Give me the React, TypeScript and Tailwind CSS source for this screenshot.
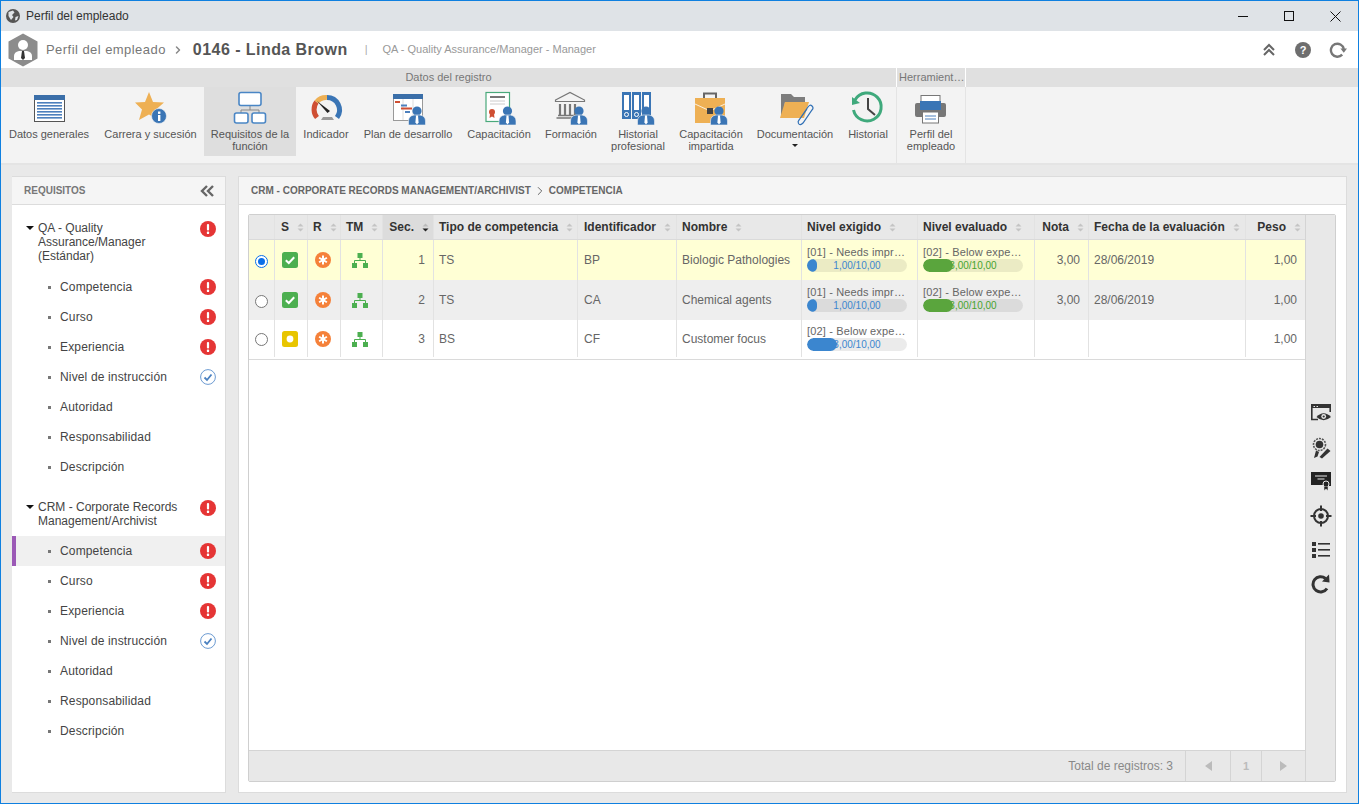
import { Fragment } from 'react';
import { ChevronRight } from 'lucide-react';

const BLUE = '#3a75b5';

function Person({ x, y }: { x: number; y: number }) {
  return (
    <g>
      <circle cx={x} cy={y - 4} r={4.6} fill={BLUE} />
      <path d={`M${x - 8.5} ${y + 10} v-4 q0 -5 5.5 -6 h6 q5.5 1 5.5 6 v4 z`} fill={BLUE} stroke="#f3f3f3" strokeWidth={0.6} />
      <path d={`M${x - 1} ${y + 0.5} h2 l0.6 7 l-1.6 2 l-1.6 -2 z`} fill="#fff" />
    </g>
  );
}

function Ico({ children }: { children: React.ReactNode }) {
  return (
    <svg width="36" height="36" viewBox="0 0 36 36" fill="none" className="overflow-visible">
      {children}
    </svg>
  );
}

const DatosIcon = () => (
  <Ico>
    <rect x="3.5" y="5.5" width="30" height="26" fill="#fff" stroke="#555" />
    <rect x="3" y="5" width="31" height="5" fill="#3a6ea8" />
    {[12, 15, 18, 21, 24, 27].map((y) => (
      <rect key={y} x="6" y={y} width="25" height="1.6" fill="#4d80bd" />
    ))}
  </Ico>
);
const CarreraIcon = () => (
  <Ico>
    <path d="M16 2 L20 12 L31 12.5 L23 19.5 L26 30 L16 24.5 L6 30 L9 19.5 L2 12.5 L12 12 Z" fill="#eeb054" strokeLinejoin="round" />
    <circle cx="26" cy="26" r="7.5" fill={BLUE} stroke="#f3f3f3" strokeWidth="0.6" />
    <rect x="25" y="25" width="2.4" height="6" fill="#fff" />
    <rect x="25" y="21.5" width="2.4" height="2.4" fill="#fff" />
  </Ico>
);
const RequisitosIcon = () => (
  <Ico>
    <path d="M18 16 V20 M9 23 V20 H27 V23" stroke="#888" />
    <rect x="7" y="2.5" width="22" height="13" rx="2" fill="#fff" stroke="#4a86c5" strokeWidth="1.6" />
    <rect x="2.5" y="23" width="13.5" height="10" rx="2" fill="#fff" stroke="#4a86c5" strokeWidth="1.6" />
    <rect x="20" y="23" width="13.5" height="10" rx="2" fill="#fff" stroke="#4a86c5" strokeWidth="1.6" />
  </Ico>
);
const IndicadorIcon = () => (
  <Ico>
    <path d="M9 27.5 A12.5 12.5 0 0 1 8.5 12" stroke="#cf4f33" strokeWidth="5" />
    <path d="M8.5 12 A12.5 12.5 0 0 1 19 7.5" stroke="#eeb054" strokeWidth="5" />
    <path d="M19 7.5 A12.5 12.5 0 0 1 29 27.5" stroke={BLUE} strokeWidth="5" />
    <path d="M9 11 L22 21 L19.5 23 Z" fill="#222" />
    <path d="M13 30 L15 27 H24 L26 30 Z" fill="#999" />
  </Ico>
);
const PlanIcon = () => (
  <Ico>
    <rect x="3.5" y="4.5" width="29" height="26" fill="#fff" stroke="#999" />
    <rect x="3" y="4" width="30" height="5" fill="#3a6ea8" />
    <path d="M13 9 V30 M23 9 V30" stroke="#ddd" />
    <rect x="5" y="11" width="5" height="2" fill="#cf4f33" />
    <rect x="11" y="14.5" width="6" height="2" fill="#4d80bd" />
    <rect x="11" y="17.5" width="11" height="2" fill="#cf4f33" />
    <rect x="15" y="21" width="5" height="2" fill="#4d80bd" />
    <Person x={27} y={25} />
  </Ico>
);
const CapacitacionIcon = () => (
  <Ico>
    <rect x="5" y="2.5" width="23.5" height="29" fill="#fff" stroke="#49a97b" strokeWidth="1.2" />
    <rect x="9" y="6" width="15" height="2" fill="#777" />
    <path d="M9 11 H24 M9 14 H24" stroke="#ccc" />
    <circle cx="11" cy="22" r="3" fill="#cf4f33" />
    <path d="M9 24 L8.5 28 L11 26.5 L13.5 28 L13 24 Z" fill="#cf4f33" />
    <Person x={26.5} y={25} />
  </Ico>
);
const FormacionIcon = () => (
  <Ico>
    <path d="M2.5 10 L17 2.5 L31.5 10 V11.5 H2.5 Z" fill="#f3f3f3" stroke="#777" strokeWidth="1.2" />
    <path d="M7 14 V25 M12 14 V25 M17 14 V25 M22 14 V25" stroke="#777" strokeWidth="2.2" />
    <path d="M3.5 28 H30 M5 25.5 H27" stroke="#777" strokeWidth="1.5" />
    <Person x={26} y={25} />
  </Ico>
);
const BinderIcon = () => (
  <Ico>
    {[2, 12, 22].map((x) => (
      <Fragment key={x}>
        <rect x={x} y="2" width="9" height="27" fill={BLUE} />
        <rect x={x + 2} y="5" width="5" height="15" fill="#fff" />
        <circle cx={x + 4.5} cy="24.5" r="2" stroke="#fff" />
      </Fragment>
    ))}
    <Person x={26} y={25} />
  </Ico>
);
const BriefcaseIcon = () => (
  <Ico>
    <path d="M11 8 V3.5 H23 V8" stroke="#666" strokeWidth="2" />
    <rect x="2" y="8" width="30" height="25" fill="#eeb054" />
    <path d="M2 14 L15 20 M32 14 L19 20" stroke="#fff" strokeWidth="0.8" />
    <rect x="14" y="18" width="6" height="6" fill="#444" />
    <Person x={26} y={25} />
  </Ico>
);
const FolderIcon = () => (
  <Ico>
    <path d="M4 4 H14 L17 7 H28 V12 H8 L6 28 H4 Z" fill="#7d7d7d" />
    <path d="M8 12 H32 L27 28 H3 Z" fill="#eeb054" />
    <path d="M22 30 L31 17 Q33 14 35 16 Q37 18 35 20 L26 33 Q23 36 21.5 33.5 Q20.5 31.5 22 30 L30 19" stroke="#2f6fb5" strokeWidth="1.2" />
  </Ico>
);
const ClockIcon = () => (
  <Ico>
    <path d="M5 10 A14 14 0 1 1 3.5 20" stroke="#3fa97c" strokeWidth="3" />
    <path d="M2 7 L10 13 L2 15 Z" fill="#3fa97c" />
    <path d="M18 8 V19 L25 25" stroke="#444" strokeWidth="2" />
  </Ico>
);
const PrinterIcon = () => (
  <Ico>
    <rect x="8" y="5.5" width="19" height="8" fill="#fff" stroke="#777" />
    <rect x="2" y="13" width="31" height="14" rx="2" fill="#777" />
    <rect x="7" y="11" width="21" height="9" fill={BLUE} />
    <rect x="9.5" y="22" width="16" height="11" fill="#fff" stroke="#777" />
    <path d="M12 26 H23 M12 29 H23" stroke="#4d80bd" />
  </Ico>
);

type Tool = { label: string; w: string; icon: React.ReactNode; active?: boolean; caret?: boolean };

const tools: Tool[] = [
  { label: 'Datos generales', w: 'w-[96px]', icon: <DatosIcon /> },
  { label: 'Carrera y sucesión', w: 'w-[107px]', icon: <CarreraIcon /> },
  { label: 'Requisitos de la función', w: 'w-[92px]', icon: <RequisitosIcon />, active: true },
  { label: 'Indicador', w: 'w-[60px]', icon: <IndicadorIcon /> },
  { label: 'Plan de desarrollo', w: 'w-[104px]', icon: <PlanIcon /> },
  { label: 'Capacitación', w: 'w-[78px]', icon: <CapacitacionIcon /> },
  { label: 'Formación', w: 'w-[66px]', icon: <FormacionIcon /> },
  { label: 'Historial profesional', w: 'w-[68px]', icon: <BinderIcon /> },
  { label: 'Capacitación impartida', w: 'w-[78px]', icon: <BriefcaseIcon /> },
  { label: 'Documentación', w: 'w-[90px]', icon: <FolderIcon />, caret: true },
  { label: 'Historial', w: 'w-[56px]', icon: <ClockIcon /> },
];

function ToolButton({ t }: { t: Tool }) {
  return (
    <div className={`${t.w} flex shrink-0 flex-col items-center pt-[3px] ${t.active ? 'bg-[#dedede]' : ''}`}>
      <div className="flex h-[38px] items-start justify-center">{t.icon}</div>
      <div className="px-1 text-center text-[11px] leading-[12px] text-[#555]">{t.label}</div>
      {t.caret && <div className="mt-[4px] h-0 w-0 border-x-[3px] border-t-[3px] border-x-transparent border-t-[#222]" />}
    </div>
  );
}

const AlertDot = () => (
  <svg width="16" height="16" viewBox="0 0 16 16">
    <circle cx="8" cy="8" r="8" fill="#e53535" />
    <rect x="6.9" y="3" width="2.2" height="6.5" rx="1" fill="#fff" />
    <rect x="6.9" y="10.6" width="2.2" height="2.4" rx="0.6" fill="#fff" />
  </svg>
);
const OkDot = () => (
  <svg width="16" height="16" viewBox="0 0 16 16" fill="none">
    <circle cx="8" cy="8" r="7.4" fill="#fff" stroke="#6c9bd2" />
    <path d="M4.5 8.5 L7 11 L11.5 5.5" stroke="#4a80c0" strokeWidth="1.8" />
  </svg>
);

type Req = { label: string; state?: 'alert' | 'ok'; active?: boolean };

const reqItems = (active: boolean): Req[] => [
  { label: 'Competencia', state: 'alert', active },
  { label: 'Curso', state: 'alert' },
  { label: 'Experiencia', state: 'alert' },
  { label: 'Nivel de instrucción', state: 'ok' },
  { label: 'Autoridad' },
  { label: 'Responsabilidad' },
  { label: 'Descripción' },
];

function TreeGroup({ lines, items, listClass }: { lines: string[]; items: Req[]; listClass: string }) {
  return (
    <div>
      <div className="relative pl-[26px] pr-[40px] text-[12px] leading-[14px] text-[#444]">
        <div className="absolute left-[14px] top-[5px] h-0 w-0 border-x-[4px] border-t-[4px] border-x-transparent border-t-[#111]" />
        {lines.map((l) => (
          <div key={l} className="whitespace-nowrap">{l}</div>
        ))}
        <div className="absolute right-[9px] top-0"><AlertDot /></div>
      </div>
      <div className={listClass}>
        {items.map((it) => (
          <div
            key={it.label}
            className={`flex h-[30px] items-center border-l-[4px] pr-[9px] text-[12px] text-[#444] ${it.active ? 'border-l-[#9b59b6] bg-[#f0f0f0]' : 'border-l-transparent'}`}
          >
            <span className="ml-[32px] h-[3px] w-[3px] bg-[#777]" />
            <span className="ml-[9px] flex-1 tracking-[0.15px]">{it.label}</span>
            {it.state === 'alert' && <AlertDot />}
            {it.state === 'ok' && <OkDot />}
          </div>
        ))}
      </div>
    </div>
  );
}

const GRID = 'grid grid-cols-[26px_33px_33px_42px_51px_144px_99px_125px_116px_117px_54px_157px_60px]';

function SortIcon({ active }: { active?: boolean }) {
  return (
    <svg width="7" height="9" viewBox="0 0 7 9" className="shrink-0">
      <path d="M3.5 0.5 L6.5 3.5 H0.5 Z" fill={active ? '#bbb' : '#c4c4c4'} />
      <path d="M3.5 8.5 L6.5 5.5 H0.5 Z" fill={active ? '#222' : '#c4c4c4'} />
    </svg>
  );
}

const headers: { label: string; pad: string; active?: boolean }[] = [
  { label: '', pad: 'pl-[5px]' },
  { label: 'S', pad: 'pl-[6px]' },
  { label: 'R', pad: 'pl-[5px]' },
  { label: 'TM', pad: 'pl-[5px]' },
  { label: 'Sec.', pad: 'justify-end pr-[4px]', active: true },
  { label: 'Tipo de competencia', pad: 'pl-[5px]' },
  { label: 'Identificador', pad: 'pl-[6px]' },
  { label: 'Nombre', pad: 'pl-[5px]' },
  { label: 'Nivel exigido', pad: 'pl-[5px]' },
  { label: 'Nivel evaluado', pad: 'pl-[5px]' },
  { label: 'Nota', pad: 'justify-end pr-[4px]' },
  { label: 'Fecha de la evaluación', pad: 'pl-[5px]' },
  { label: 'Peso', pad: 'justify-end pr-[4px]' },
];

function Radio({ on }: { on?: boolean }) {
  return on ? (
    <div className="flex h-[13px] w-[13px] items-center justify-center rounded-full border border-[#0a6fe8] bg-white">
      <div className="h-[7px] w-[7px] rounded-full bg-[#0a6fe8]" />
    </div>
  ) : (
    <div className="h-[13px] w-[13px] rounded-full border border-[#777] bg-white" />
  );
}

const StatusOk = () => (
  <svg width="16" height="16" viewBox="0 0 16 16" fill="none">
    <rect width="16" height="16" rx="2.5" fill="#4caf50" />
    <path d="M3.8 8.2 L6.8 11 L12.2 5.2" stroke="#fff" strokeWidth="2" />
  </svg>
);
const StatusWait = () => (
  <svg width="16" height="16" viewBox="0 0 16 16">
    <rect width="16" height="16" rx="2.5" fill="#e8c500" />
    <circle cx="8" cy="8" r="3.4" fill="#fff" />
  </svg>
);
const Asterisk = () => (
  <svg width="16" height="16" viewBox="0 0 16 16" fill="none">
    <circle cx="8" cy="8" r="8" fill="#f5813a" />
    <path d="M8 3.5 V12.5 M4.1 5.75 L11.9 10.25 M11.9 5.75 L4.1 10.25" stroke="#fff" strokeWidth="2" />
  </svg>
);
const Hierarchy = () => (
  <svg width="16" height="16" viewBox="0 0 16 16" fill="none">
    <rect x="5.5" y="1" width="5" height="5" fill="#4caf50" />
    <rect x="0" y="11" width="5" height="5" fill="#4caf50" />
    <rect x="11" y="11" width="5" height="5" fill="#4caf50" />
    <path d="M8 6 V9 M2.5 11 V8.5 H13.5 V11" stroke="#4caf50" />
  </svg>
);

function Level({ text, value, tone, top }: { text: string; value: string; tone: 'blue' | 'green'; top: string }) {
  const pct = parseFloat(value.replace(',', '.')) * 10;
  return (
    <div className={`px-[5px] ${top}`}>
      <div className="whitespace-nowrap text-[11px] leading-[13px] tracking-[0.15px] text-[#666]">{text}</div>
      <div className="relative h-[13px] w-[100px] overflow-hidden rounded-full bg-black/[0.08]">
        <div className={`text-center text-[10px] leading-[13px] ${tone === 'blue' ? 'text-[#3b86cf]' : 'text-[#46a32e]'}`}>{value}/10,00</div>
        <div
          className={`absolute left-0 top-0 h-full rounded-full ${tone === 'blue' ? 'bg-[#3b86cf]' : 'bg-[#5aa53d]'}`}
          style={{ width: `${pct}%` }}
        />
      </div>
    </div>
  );
}

type Row = {
  rowClass: string;
  levelTop: string;
  on?: boolean;
  wait?: boolean;
  sec: string;
  tipo: string;
  id: string;
  name: string;
  req: [string, string];
  ev?: [string, string];
  nota: string;
  fecha: string;
};

const rows: Row[] = [
  { rowClass: 'h-[40px] bg-[#ffffd5]', levelTop: 'pt-[6px]', on: true, sec: '1', tipo: 'TS', id: 'BP', name: 'Biologic Pathologies', req: ['[01] - Needs impr…', '1,00'], ev: ['[02] - Below expe…', '3,00'], nota: '3,00', fecha: '28/06/2019' },
  { rowClass: 'h-[40px] bg-[#eeeeee]', levelTop: 'pt-[6px]', sec: '2', tipo: 'TS', id: 'CA', name: 'Chemical agents', req: ['[01] - Needs impr…', '1,00'], ev: ['[02] - Below expe…', '3,00'], nota: '3,00', fecha: '28/06/2019' },
  { rowClass: 'h-[39px] bg-white pb-[2px]', levelTop: 'pt-[5px]', wait: true, sec: '3', tipo: 'BS', id: 'CF', name: 'Customer focus', req: ['[02] - Below expe…', '3,00'], nota: '', fecha: '' },
];

const cell = 'flex items-center border-r border-[#e2e2e2] min-w-0';
const txt = 'pl-[5px] text-[12px] text-[#666]';
const num = 'justify-end pr-[8px] text-[12px] text-[#666]';

const SideIcons = () => (
  <div className="flex flex-col items-center">
    <svg width="22" height="20" viewBox="0 0 22 20" fill="none" className="mb-[14px]">
      <path d="M8 16.5 H1.8 V1.8 H20.2 V9" stroke="#333" strokeWidth="1.6" />
      <rect x="2" y="2" width="18" height="3" fill="#333" />
      <path d="M3.5 3.5 H5 M6.5 3.5 H8" stroke="#e8e8e8" />
      <path d="M6.5 14 Q13.5 6.5 21 14 Q13.5 20.5 6.5 14 Z" fill="#333" />
      <circle cx="13.7" cy="13.5" r="2.4" fill="#e8e8e8" />
      <circle cx="13.7" cy="13.5" r="1.1" fill="#333" />
    </svg>
    <svg width="22" height="22" viewBox="0 0 22 22" fill="none" className="mb-[12px]">
      <circle cx="9.5" cy="7.5" r="6" stroke="#555" strokeWidth="1.6" strokeDasharray="2 1" />
      <circle cx="9.5" cy="7.5" r="3.8" fill="#333" />
      <path d="M6 13.5 L4 21 L7.5 19.5 L9 15 Z" fill="#333" />
      <path d="M9.5 20 L17.5 11.5 L20.5 14 L12 21.5 Z" fill="#333" />
    </svg>
    <svg width="22" height="20" viewBox="0 0 22 20" fill="none" className="mb-[14px]">
      <path d="M1 1 H21 V15 H16 V14 H1 Z" fill="#222" />
      <path d="M5 5 H17 M7.5 8 H14.5" stroke="#e8e8e8" />
      <circle cx="16" cy="13" r="3" fill="#222" stroke="#e8e8e8" />
      <path d="M14 15.5 V19.5 L16 18 L18 19.5 V15.5" fill="#222" stroke="#e8e8e8" strokeWidth="0.5" />
    </svg>
    <svg width="22" height="22" viewBox="0 0 22 22" fill="none" className="mb-[14px]">
      <circle cx="11" cy="11" r="7" stroke="#333" strokeWidth="2" />
      <circle cx="11" cy="11" r="2.8" fill="#333" />
      <path d="M11 0.5 V6 M11 16 V21.5 M0.5 11 H6 M16 11 H21.5" stroke="#333" strokeWidth="2" />
    </svg>
    <svg width="20" height="18" viewBox="0 0 20 18" fill="none" className="mb-[15px]">
      {[1, 7, 13].map((y) => (
        <Fragment key={y}>
          <rect x="1" y={y} width="4" height="4" fill="#333" />
          <rect x="7" y={y + 1} width="12" height="1.6" fill="#333" />
        </Fragment>
      ))}
    </svg>
    <svg width="20" height="20" viewBox="0 0 20 20" fill="none">
      <path d="M16 14.5 A7.6 7.6 0 1 1 14.5 4.5" stroke="#333" strokeWidth="3" />
      <path d="M11 7.5 L18.5 8.5 L18 0.5 Z" fill="#333" />
    </svg>
  </div>
);

export default function App() {
  return (
    <div className="flex h-screen w-screen flex-col overflow-hidden border border-[#0f80e0] bg-[#e9e9e9] font-['Liberation_Sans',Arial,sans-serif]">
      {/* title bar */}
      <div className="flex h-[30px] shrink-0 items-center bg-[#dfe3e7] pl-[5px]">
        <svg width="14" height="14" viewBox="0 0 14 14">
          <circle cx="7" cy="7" r="7" fill="#555" />
          <path d="M2.5 3 L7 1.5 L8.5 3.5 L6 6 L7.5 8 L5 11 L2.5 7 Z M9.5 8 L12.5 7 L11 11 L9 11.5 Z" fill="#dfe3e7" />
        </svg>
        <span className="ml-[6px] text-[12px] text-[#333]">Perfil del empleado</span>
        <div className="ml-auto flex items-center">
          <div className="flex h-[30px] w-[46px] items-center justify-center"><div className="h-px w-[10px] bg-[#111]" /></div>
          <div className="flex h-[30px] w-[46px] items-center justify-center"><div className="h-[10px] w-[10px] border border-[#111]" /></div>
          <div className="flex h-[30px] w-[46px] items-center justify-center">
            <svg width="11" height="11" viewBox="0 0 11 11" stroke="#111"><path d="M0.5 0.5 L10.5 10.5 M10.5 0.5 L0.5 10.5" /></svg>
          </div>
        </div>
      </div>

      {/* record header */}
      <div className="flex h-[37px] shrink-0 items-center bg-white pl-[7px]">
        <svg width="30" height="34" viewBox="0 0 30 34">
          <path d="M15 0.5 L29.5 8.5 V25.5 L15 33.5 L0.5 25.5 V8.5 Z" fill="#8c8c8c" />
          <circle cx="15" cy="12" r="5" fill="#fff" />
          <path d="M6 27 V23 Q6 19 11 18 H19 Q24 19 24 23 V27 Z" fill="#fff" />
          <path d="M14 18 H16 L17 25 L15 27 L13 25 Z" fill="#333" />
        </svg>
        <span className="ml-[8px] text-[13px] tracking-[0.45px] text-[#777]">Perfil del empleado</span>
        <ChevronRight size={12} strokeWidth={3} className="ml-[6px] text-[#888]" />
        <span className="ml-[9px] text-[16px] font-bold tracking-[0.45px] text-[#555]">0146 - Linda Brown</span>
        <span className="ml-[17px] text-[11px] text-[#aaa]">|</span>
        <span className="ml-[15px] text-[11px] text-[#999]">QA - Quality Assurance/Manager - Manager</span>
        <div className="ml-auto flex items-center gap-[18px] pr-[11px]">
          <svg width="16" height="16" viewBox="0 0 16 16" fill="none" stroke="#666" strokeWidth="2"><path d="M3 8 L8 3 L13 8 M3 13 L8 8 L13 13" /></svg>
          <svg width="16" height="16" viewBox="0 0 16 16">
            <circle cx="8" cy="8" r="8" fill="#6e6e6e" />
            <text x="8" y="12" textAnchor="middle" fontSize="11" fontWeight="700" fill="#fff" fontFamily="Liberation Sans">?</text>
          </svg>
          <svg width="18" height="16" viewBox="0 0 18 16" fill="none">
            <path d="M13.2 12.6 A6.5 6.5 0 1 1 14.8 7" stroke="#777" strokeWidth="2.4" />
            <path d="M11.4 6.5 L18 6.5 L14.8 10.8 Z" fill="#777" />
          </svg>
        </div>
      </div>

      {/* ribbon */}
      <div className="flex h-[19px] shrink-0 gap-[1px] bg-white text-[11px] leading-[19px] text-[#777]">
        <div className="w-[895px] bg-[#e0e0e0] text-center">Datos del registro</div>
        <div className="w-[68px] whitespace-nowrap bg-[#e0e0e0] px-[2px] text-center">Herramient…</div>
        <div className="flex-1 bg-[#e0e0e0]" />
      </div>
      <div className="flex h-[78px] shrink-0 border-b-[2px] border-[#e4e4e4] bg-[#f3f3f3]">
        <div className="flex w-[895px] pb-[7px]">
          {tools.map((t) => (
            <ToolButton key={t.label} t={t} />
          ))}
        </div>
        <div className="border-x border-[#e4e4e4]">
          <ToolButton t={{ label: 'Perfil del empleado', w: 'w-[68px]', icon: <PrinterIcon /> }} />
        </div>
      </div>

      {/* body */}
      <div className="flex min-h-0 flex-1 gap-[12px] pb-[10px] pl-[11px] pr-[11px] pt-[11px]">
        {/* requirements tree */}
        <div className="flex w-[214px] shrink-0 flex-col border-y border-r border-[#dcdcdc] bg-white">
          <div className="flex h-[28px] shrink-0 items-center justify-between border-b border-[#dcdcdc] bg-[#f5f5f5] pl-[12px] pr-[11px]">
            <span className="text-[10px] font-bold text-[#777]">REQUISITOS</span>
            <svg width="14" height="12" viewBox="0 0 14 12" fill="none" stroke="#666" strokeWidth="2.4"><path d="M7 1 L2 6 L7 11 M13 1 L8 6 L13 11" /></svg>
          </div>
          <div className="pt-[16px]">
            <TreeGroup lines={['QA - Quality', 'Assurance/Manager', '(Estándar)']} items={reqItems(false)} listClass="mt-[9px]" />
            <div className="h-[18px]" />
            <TreeGroup lines={['CRM - Corporate Records', 'Management/Archivist']} items={reqItems(true)} listClass="mt-[8px]" />
          </div>
        </div>

        {/* competence panel */}
        <div className="flex min-w-0 flex-1 flex-col border border-[#dcdcdc] bg-white">
          <div className="flex h-[28px] shrink-0 items-center border-b border-[#dcdcdc] bg-[#f5f5f5] pl-[12px] text-[10px] font-bold text-[#666]">
            <span>CRM - CORPORATE RECORDS MANAGEMENT/ARCHIVIST</span>
            <ChevronRight size={14} strokeWidth={1.5} className="mx-[2px] text-[#555]" />
            <span>COMPETENCIA</span>
          </div>
          <div className="flex min-h-0 flex-1 pb-[10px] pl-[9px] pr-[10px] pt-[9px]">
            <div className="flex min-w-0 flex-1 overflow-hidden rounded-[2px] border border-[#cfcfcf]">
              <div className="flex min-w-0 flex-1 flex-col">
                <div className={`${GRID} h-[25px] shrink-0 border-b border-[#dadada] bg-[#e8e8e8]`}>
                  {headers.map((h, i) => (
                    <div
                      key={i}
                      className={`${cell} gap-[8px] border-[#dcdcdc] ${h.pad} ${h.active ? 'bg-[#dcdcdc]' : ''}`}
                    >
                      {h.label && <span className="whitespace-nowrap text-[12px] font-bold text-[#333]">{h.label}</span>}
                      {h.label && <SortIcon active={h.active} />}
                    </div>
                  ))}
                </div>
                <div className="border-b border-[#dadada]">
                  {rows.map((r) => (
                    <div key={r.sec} className={`${GRID} ${r.rowClass}`}>
                      <div className={`${cell} justify-center pt-[2px]`}><Radio on={r.on} /></div>
                      <div className={`${cell} justify-center pr-[2px]`}>{r.wait ? <StatusWait /> : <StatusOk />}</div>
                      <div className={`${cell} justify-center pr-[2px]`}><Asterisk /></div>
                      <div className={`${cell} justify-center pr-[3px]`}><Hierarchy /></div>
                      <div className={`${cell} ${num}`}>{r.sec}</div>
                      <div className={`${cell} ${txt}`}>{r.tipo}</div>
                      <div className={`${cell} pl-[6px] text-[12px] text-[#666]`}>{r.id}</div>
                      <div className={`${cell} ${txt}`}>{r.name}</div>
                      <div className="min-w-0 border-r border-[#e2e2e2]"><Level text={r.req[0]} value={r.req[1]} tone="blue" top={r.levelTop} /></div>
                      <div className="min-w-0 border-r border-[#e2e2e2]">{r.ev && <Level text={r.ev[0]} value={r.ev[1]} tone="green" top={r.levelTop} />}</div>
                      <div className={`${cell} ${num}`}>{r.nota}</div>
                      <div className={`${cell} ${txt}`}>{r.fecha}</div>
                      <div className={`${cell} ${num}`}>1,00</div>
                    </div>
                  ))}
                </div>
                <div className="flex-1 bg-white" />
                <div className="flex h-[31px] shrink-0 items-center justify-end border-t border-[#d4d4d4] bg-[#e8e8e8] text-[#999]">
                  <span className="mr-[12px] text-[12px] text-[#888]">Total de registros: 3</span>
                  <div className="flex h-full w-[45px] items-center justify-center border-l border-[#d4d4d4]">
                    <div className="h-0 w-0 border-y-[5px] border-r-[7px] border-y-transparent border-r-[#bbb]" />
                  </div>
                  <div className="flex h-full w-[31px] items-center justify-center border-l border-[#d4d4d4] text-[11px] font-bold text-[#bbb]">1</div>
                  <div className="flex h-full w-[44px] items-center justify-center border-l border-[#d4d4d4]">
                    <div className="h-0 w-0 border-y-[5px] border-l-[7px] border-y-transparent border-l-[#bbb]" />
                  </div>
                </div>
              </div>
              <div className="flex w-[30px] shrink-0 flex-col items-center justify-center border-l border-[#d4d4d4] bg-[#e8e8e8]">
                <SideIcons />
              </div>
            </div>
          </div>
        </div>
      </div>
    </div>
  );
}
